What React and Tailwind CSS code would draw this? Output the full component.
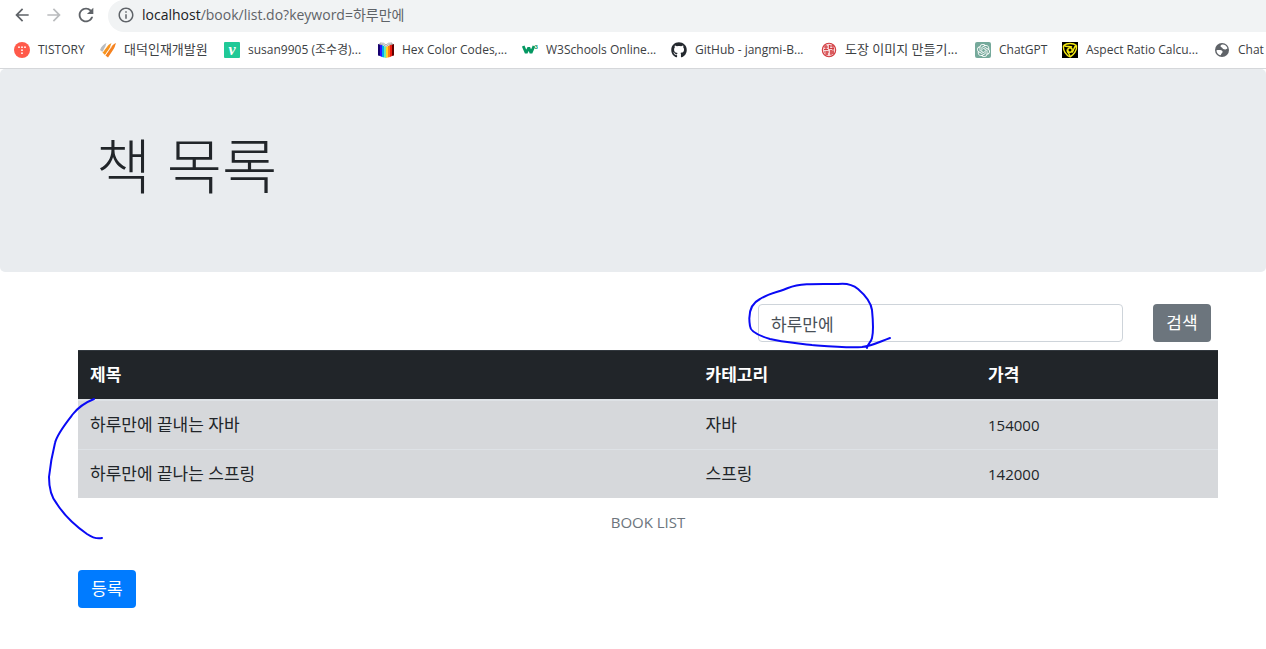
import { FaGithub } from "react-icons/fa";
import { SiOpenai } from "react-icons/si";
import { MdArrowBack, MdArrowForward, MdRefresh, MdInfoOutline } from "react-icons/md";

const books = [
  { id: 1, title: "하루만에 끝내는 자바", category: "자바", price: 154000 },
  { id: 2, title: "하루만에 끝나는 스프링", category: "스프링", price: 142000 },
];

const bookmarks = [
  { label: "TISTORY", width: "w-[86px]", text: "text-xs", icon: <TistoryIcon /> },
  { label: "대덕인재개발원", width: "w-[124px]", text: "text-[13px]", icon: <DaedeokIcon /> },
  { label: "susan9905 (조수경)...", width: "w-[154px]", text: "text-xs", icon: <VelogIcon /> },
  { label: "Hex Color Codes,...", width: "w-[144px]", text: "text-xs", icon: <HexIcon /> },
  { label: "W3Schools Online...", width: "w-[149px]", text: "text-xs", icon: <W3Icon /> },
  { label: "GitHub - jangmi-B...", width: "w-[150px]", text: "text-xs", icon: <FaGithub size={16} color="#24292f" /> },
  { label: "도장 이미지 만들기...", width: "w-[154px]", text: "text-[13px]", icon: <StampIcon /> },
  { label: "ChatGPT", width: "w-[87px]", text: "text-xs", icon: <ChatGptIcon /> },
  { label: "Aspect Ratio Calcu...", width: "w-[152px]", text: "text-xs", icon: <AspectIcon /> },
  { label: "Chat", width: "w-[86px]", text: "text-xs", icon: <GlobeIcon /> },
];

function TistoryIcon() {
  return (
    <svg width="16" height="16" viewBox="0 0 16 16">
      <circle cx="8" cy="8" r="8" fill="#ff5a4a" />
      <g fill="#fff">
        <circle cx="5" cy="5.2" r="0.9" />
        <circle cx="8" cy="5.2" r="0.9" />
        <circle cx="11" cy="5.2" r="0.9" />
        <circle cx="8" cy="8.2" r="0.9" />
        <circle cx="8" cy="11.2" r="0.9" />
      </g>
    </svg>
  );
}

function DaedeokIcon() {
  return (
    <svg width="16" height="16" viewBox="0 0 16 16">
      <path d="M0 8 C1.5 4 4 2 6.5 1 C5.5 3 6 4 4.5 6 L2.5 10 Z" fill="#b9bcc0" />
      <path d="M2.5 10.5 C5 7 7.5 3 11.5 1 C10.5 3 10.5 5 9 7 L5 13 Z" fill="#f7941e" />
      <path d="M5.5 13.5 C8 10 10.5 3.5 16 1 C15 4 14.5 6 13 8 L8 15.5 Z" fill="#f58220" />
      <path d="M2.8 10 L7 4.2 M5.4 13 L11.6 4.5" stroke="#fff" strokeWidth="0.7" />
    </svg>
  );
}

function VelogIcon() {
  return (
    <span className="flex h-4 w-4 items-center justify-center rounded-[1px] bg-[#20c997] font-['Liberation_Serif',serif] text-base leading-4 font-bold text-white italic">
      v
    </span>
  );
}

function HexIcon() {
  return (
    <svg width="16" height="16" viewBox="0 0 16 16">
      <path d="M0 2 L2 2.5 V14 L0 13.5 Z" fill="#160070" />
      <path d="M2 2.5 L4 3 V15 L2 14 Z" fill="#2615ff" />
      <path d="M4 3 L6 4 V15.5 L4 15 Z" fill="#00aaf0" />
      <path d="M6 4 L8 5 V16 L6 15.5 Z" fill="#69efb0" />
      <path d="M8 5 L10 4 V15.5 L8 16 Z" fill="#ffd426" />
      <path d="M10 4 L12 3 V15 L10 15.5 Z" fill="#ff7b16" />
      <path d="M12 3 L14 2.5 V14 L12 15 Z" fill="#ed1b10" />
      <path d="M14 2.5 L16 2 V13.5 L14 14 Z" fill="#620000" />
      <path d="M2 1 Q6 .5 8 3 Q10 .5 14 1 L14 2.5 Q10 2 8 4.5 Q6 2 2 2.5 Z" fill="#fff" stroke="#888" strokeWidth=".7" />
    </svg>
  );
}

function W3Icon() {
  return (
    <svg width="16" height="16" viewBox="0 0 16 16">
      <path
        d="M1.2 4 L4.2 11 L6.8 5.5 L9 11 L12 4"
        fill="none"
        stroke="#059862"
        strokeWidth="2.8"
        strokeLinejoin="bevel"
      />
      <text x="12.6" y="7" fill="#059862" fontSize="6" fontWeight="700" fontFamily="Liberation Sans, sans-serif">
        3
      </text>
    </svg>
  );
}

function StampIcon() {
  return (
    <svg width="16" height="16" viewBox="0 0 16 16" fill="none" stroke="#d23c40">
      <circle cx="8" cy="8" r="6.7" fill="#f7d5d6" strokeWidth="1.1" />
      <path
        d="M3 5 H7 M5 3 V8 M3 7.5 H7 M8.5 3 V7 M8.5 4 H12 M12 3 V8 M8.5 6.5 H13 M3 10 H8 M4 12 H7 M6 9 V13 M9 9 H13 M9 11 H13 M10 8 V13 M12 9 V12"
        strokeWidth="1.2"
      />
    </svg>
  );
}

function ChatGptIcon() {
  return (
    <span className="flex h-4 w-4 items-center justify-center rounded-[2px] bg-[#75a99b] text-white">
      <SiOpenai size={13} />
    </span>
  );
}

// Yellow 45rpm record adapter on black
function AspectIcon() {
  return (
    <svg width="16" height="16" viewBox="0 0 16 16">
      <rect width="16" height="16" fill="#000" />
      <g fill="none" stroke="#f7ec13" strokeWidth="1.4">
        <circle cx="8" cy="8" r="2.2" />
        <path d="M1.5 3.5 C5 0.8 11 0.8 14.5 3.5 M1.5 3.5 C4 5.5 7 3.5 10 5" />
        <path d="M14.5 3.5 C15.2 8 12 13 8 15 M14.5 3.5 C11 5 12.5 8 10 10.5" />
        <path d="M8 15 C3.5 12.5 1 8 1.5 3.5 M8 15 C8.5 12 5 11 5 7.5" />
      </g>
    </svg>
  );
}

function GlobeIcon() {
  return (
    <svg width="16" height="16" viewBox="0 0 16 16">
      <circle cx="8" cy="8" r="7" fill="#5f6368" />
      <path d="M8.2 2.5 C6 3 6 5 8 5.6 C8.5 7 10 7.5 11.5 7.4 C13 7 13.5 6.5 13.4 6 C12.8 3.8 10.5 2.2 8.2 2.5 Z" fill="#fff" />
      <path d="M2.5 8.2 C5 7.6 8 8 8.6 9.4 C8.8 11 7 11 6.8 13.2 C4 13 2.4 10.6 2.5 8.2 Z" fill="#fff" />
    </svg>
  );
}

function BrowserBar() {
  return (
    <header className="border-b border-[#d5d7da] bg-white">
      <div className="flex h-8 items-center pb-0.5 pl-3">
        <button type="button" aria-label="뒤로" className="mr-3 text-[#5f6368]">
          <MdArrowBack size={20} />
        </button>
        <button type="button" aria-label="앞으로" className="mr-[11px] text-[#babcbe]">
          <MdArrowForward size={20} />
        </button>
        <button type="button" aria-label="새로고침" className="mr-[11px] text-[#5f6368]">
          <MdRefresh size={22} />
        </button>
        <div className="flex h-8 flex-1 items-center self-start rounded-l-full bg-[#f1f3f4] pb-0.5 pl-[9px] whitespace-nowrap">
          <MdInfoOutline size={18} color="#5f6368" />
          <p className="ml-[7px] text-sm leading-5 text-[#5f6368]">
            <span className="text-[#202124]">localhost</span>
            /book/list.do?keyword=하루만에
          </p>
        </div>
      </div>

      <nav className="flex h-9 items-center overflow-hidden pl-[14px]">
        {bookmarks.map((item) => (
          <a
            key={item.label}
            href="#"
            className={`flex shrink-0 items-center gap-2 whitespace-nowrap text-[#3c4043] ${item.width} ${item.text}`}
          >
            <span className="flex w-4 shrink-0 justify-center">{item.icon}</span>
            {item.label}
          </a>
        ))}
      </nav>
    </header>
  );
}

// Pen marks drawn over the search box and the result rows
function PenMarks() {
  return (
    <svg
      className="pointer-events-none absolute top-0 left-0"
      width="900"
      height="560"
      viewBox="0 0 900 560"
      fill="none"
      stroke="#0a0af5"
      strokeWidth="2"
      strokeLinecap="round"
      strokeLinejoin="round"
    >
      <path d="M890 338 C879 342 872 346 862 347 C846 348 825 346 812 345 C797 343 782 342 770 339 C760 336 750 332 750 326 C748 314 750 304 760 299 C769 293 779 292 788 288 C801 283 818 284 838 284 C846 283 852 284 858 289 C865 295 871 303 872 310 C873 320 874 330 872 338 C871 343 867 344 867 348" />
      <path d="M94 399 C84 403 77 409 73 414 C66 423 57 434 55 443 C51 459 50 467 49 477 C49 488 51 497 57 504 C66 518 77 527 87 534 C93 538 98 539 102 538" />
    </svg>
  );
}

export default function App() {
  return (
    <div className="relative bg-white font-['Open_Sans','Noto_Sans_CJK_KR',sans-serif] text-[#212529]">
      <BrowserBar />

      <section className="mb-8 rounded-[5px] bg-[#e9ecef] pt-[60px] pb-[68px] pl-24">
        <h1 className="text-[60px] leading-[75px] font-light">책 목록</h1>
      </section>

      <main className="pr-12 pl-[78px] text-[17px] leading-6">
        <form className="mb-2 flex justify-end gap-[30px] pr-[7px]" onSubmit={(e) => e.preventDefault()}>
          <input
            type="text"
            name="keyword"
            aria-label="검색어"
            defaultValue="하루만에"
            className="h-[38px] w-[365px] rounded border border-[#ced4da] px-3 text-[#495057]"
          />
          <button type="submit" className="h-[38px] w-[58px] rounded bg-[#6c757d] text-white">
            검색
          </button>
        </form>

        <table className="w-full table-fixed caption-bottom border-collapse text-left">
          <caption className="py-3 text-center text-[15px] leading-6 text-[#6c757d]">BOOK LIST</caption>
          <thead className="bg-[#212529] text-white">
            <tr className="border-t border-b-2 border-t-[#32383e] border-b-[#dee2e6]">
              <th className="w-[54%] p-3">제목</th>
              <th className="p-3">카테고리</th>
              <th className="w-[242px] p-3">가격</th>
            </tr>
          </thead>
          <tbody className="bg-[#d6d8db]">
            {books.map((book) => (
              <tr key={book.id} className="border-t border-[#dee2e6]">
                <td className="p-3">{book.title}</td>
                <td className="p-3">{book.category}</td>
                <td className="p-3 text-[15px]">{book.price}</td>
              </tr>
            ))}
          </tbody>
        </table>

        <button type="button" className="mt-6 h-[38px] w-[58px] rounded bg-[#007bff] text-white">
          등록
        </button>
      </main>

      <PenMarks />
    </div>
  );
}
